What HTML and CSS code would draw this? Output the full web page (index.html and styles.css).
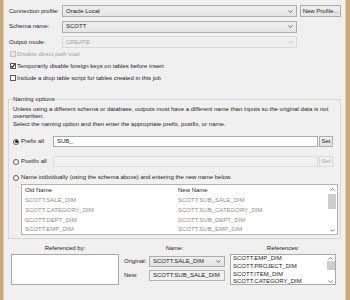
FILE: index.html
```html
<!DOCTYPE html>
<html>
<head>
<meta charset="utf-8">
<link rel="stylesheet" href="styles.css">
</head>
<body>
<div class="window">
  <div class="edge edge-left"></div>
  <div class="main">
    <div class="form-row">
      <span class="lbl">Connection profile:</span>
      <div class="combo"><span class="val">Oracle Local</span><svg class="chev" width="5" height="3" viewBox="0 0 5 3"><polyline points="0.5,0.4 2.5,2.4 4.5,0.4"/></svg></div>
      <div class="btn-cell"><button class="btn">New Profile...</button></div>
    </div>
    <div class="form-row">
      <span class="lbl">Schema name:</span>
      <div class="combo"><span class="val">SCOTT</span><svg class="chev" width="5" height="3" viewBox="0 0 5 3"><polyline points="0.5,0.4 2.5,2.4 4.5,0.4"/></svg></div>
      <div class="btn-cell"></div>
    </div>
    <div class="form-row">
      <span class="lbl">Output mode:</span>
      <div class="combo disabled"><span class="val">CREATE</span><svg class="chev" width="5" height="3" viewBox="0 0 5 3"><polyline points="0.5,0.4 2.5,2.4 4.5,0.4"/></svg></div>
      <div class="btn-cell"></div>
    </div>

    <div class="check disabled"><span class="box"></span><span>Disable direct path load</span></div>
    <div class="check"><span class="box"><svg width="6" height="6" viewBox="0 0 6 6"><polyline points="1.2,3 2.4,4.4 4.8,1.2"/></svg></span><span>Temporarily disable foreign keys on tables before insert</span></div>
    <div class="check"><span class="box"></span><span>Include a drop table script for tables created in this job</span></div>

    <fieldset class="group">
      <legend>Naming options</legend>
      <div class="desc">Unless using a different schema or database, outputs must have a different name than inputs so the original data is not<br>overwritten.<br>Select the naming option and then enter the appropriate prefix, postfix, or name.</div>

      <div class="opt-row first">
        <span class="radio-lbl"><span class="radio on"></span>Prefix all</span>
        <div class="field">SUB_</div>
        <button class="set">Set</button>
      </div>
      <div class="opt-row second">
        <span class="radio-lbl"><span class="radio"></span>Postfix all</span>
        <div class="field disabled"></div>
        <button class="set disabled">Set</button>
      </div>
      <div class="opt-row third">
        <span class="radio-lbl wide"><span class="radio"></span>Name individually (using the schema above) and entering the new name below.</span>
      </div>

      <div class="grid">
        <div class="grid-body">
          <div class="g-row head"><span class="c1">Old Name</span><span class="c2">New Name</span></div>
          <div class="g-row"><span class="c1">SCOTT.SALE_DIM</span><span class="c2">SCOTT.SUB_SALE_DIM</span></div>
          <div class="g-row"><span class="c1">SCOTT.CATEGORY_DIM</span><span class="c2">SCOTT.SUB_CATEGORY_DIM</span></div>
          <div class="g-row"><span class="c1">SCOTT.DEPT_DIM</span><span class="c2">SCOTT.SUB_DEPT_DIM</span></div>
          <div class="g-row"><span class="c1">SCOTT.EMP_DIM</span><span class="c2">SCOTT.SUB_EMP_DIM</span></div>
        </div>
        <div class="vscroll tall">
          <svg class="arr" width="5" height="3" viewBox="0 0 5 3"><polyline points="0.5,2.6 2.5,0.6 4.5,2.6"/></svg>
          <div class="thumb t1"></div>
          <div class="spacer"></div>
          <svg class="arr" width="5" height="3" viewBox="0 0 5 3"><polyline points="0.5,0.4 2.5,2.4 4.5,0.4"/></svg>
        </div>
      </div>
    </fieldset>

    <div class="bottom">
      <div class="col">
        <div class="title">Referenced by:</div>
        <div class="listbox"></div>
      </div>
      <div class="col">
        <div class="title">Name:</div>
        <div class="name-row r1">
          <span class="nlbl">Original:</span>
          <div class="combo small"><span class="val">SCOTT.SALE_DIM</span><svg class="chev" width="5" height="3" viewBox="0 0 5 3"><polyline points="0.5,0.4 2.5,2.4 4.5,0.4"/></svg></div>
        </div>
        <div class="name-row r2">
          <span class="nlbl">New:</span>
          <div class="field readonly">SCOTT.SUB_SALE_DIM</div>
        </div>
      </div>
      <div class="col">
        <div class="title">References:</div>
        <div class="listbox refs">
          <div class="items">
            <div>SCOTT.EMP_DIM</div>
            <div>SCOTT.PROJECT_DIM</div>
            <div>SCOTT.ITEM_DIM</div>
            <div>SCOTT.CATEGORY_DIM</div>
          </div>
          <div class="vscroll">
            <svg class="arr" width="5" height="3" viewBox="0 0 5 3"><polyline points="0.5,2.6 2.5,0.6 4.5,2.6"/></svg>
            <div class="thumb t2"></div>
            <div class="spacer"></div>
            <svg class="arr" width="5" height="3" viewBox="0 0 5 3"><polyline points="0.5,0.4 2.5,2.4 4.5,0.4"/></svg>
          </div>
        </div>
      </div>
    </div>
  </div>
  <div class="edge edge-right"></div>
</div>
</body>
</html>
```

FILE: styles.css
```css
* { box-sizing: border-box; }
html, body { margin: 0; padding: 0; }
body {
  width: 350px;
  height: 300px;
  overflow: hidden;
  background: #f0f0f0;
  font-family: "Liberation Sans", Arial, sans-serif;
  font-size: 6px;
  line-height: 7px;
  color: #1e1e1e;
}
.window { display: flex; width: 350px; height: 300px; }
.edge { background: #cba87c; flex: none; }
.edge-left { width: 4px; border-right: 1px solid #e3cfb3; }
.edge-right { width: 5px; border-left: 1px solid #e3cfb3; }
.main {
  flex: 1;
  min-width: 0;
  padding: 5px 4px 0 5px;
  display: flex;
  flex-direction: column;
}

/* top form */
.form-row {
  display: grid;
  grid-template-columns: 53px 1fr 44px;
  align-items: center;
  height: 12px;
  margin-bottom: 3.5px;
}
.form-row:nth-child(3) { margin-bottom: 0; }
.lbl { white-space: nowrap; }
.btn-cell { display: flex; justify-content: flex-end; height: 12px; }

.combo {
  height: 12px;
  border: 1px solid #adadad;
  background: linear-gradient(#eeeeee, #e4e4e4);
  display: flex;
  align-items: center;
  padding: 0 3px 0 3px;
}
.combo .val { flex: 1; white-space: nowrap; overflow: hidden; }
.chev { flex: none; }
.chev polyline, .arr polyline { fill: none; stroke: #4a4a4a; stroke-width: 0.8; }
.combo.disabled { background: #efefef; border-color: #dadada; color: #a3a3a3; }
.combo.disabled .chev polyline { stroke: #b8b8b8; }

.btn {
  width: 41px;
  height: 12px;
  padding: 0;
  margin: 0;
  border: 1px solid #adadad;
  background: linear-gradient(#efefef, #e3e3e3);
  font: inherit;
  color: #1e1e1e;
  white-space: nowrap;
}

/* checkboxes */
.check {
  display: flex;
  align-items: center;
  gap: 1px;
  height: 12px;
  padding-left: 1px;
  white-space: nowrap;
}
.check .box {
  width: 6px;
  height: 6px;
  border: 1px solid #5a5a5a;
  background: #fff;
  display: flex;
  align-items: center;
  justify-content: center;
  flex: none;
}
.check .box svg { display: block; margin: -1px; }
.check .box polyline { fill: none; stroke: #1e1e1e; stroke-width: 1.1; }
.check.disabled { color: #a3a3a3; }
.check.disabled .box { border-color: #c4c4c4; background: #e6e6e6; }

/* group box */
.group {
  margin: 11.5px 0 0 -1px;
  padding: 3px 2px 3px 4px;
  border: 1px solid #d8d8d8;
  min-width: 0;
}
.group legend { padding: 0; margin-left: 0; line-height: 7px; }
.desc { line-height: 7.5px; white-space: nowrap; }

.opt-row {
  display: flex;
  align-items: center;
  height: 11px;
  margin-right: 5px;
}
.opt-row.first { margin-top: 8.3px; }
.opt-row.second { margin-top: 9px; }
.opt-row.third { margin-top: 5px; }
.radio-lbl {
  width: 40px;
  flex: none;
  display: flex;
  align-items: center;
  gap: 2px;
  white-space: nowrap;
}
.radio-lbl.wide { width: auto; }
.radio {
  width: 6px;
  height: 6px;
  border-radius: 50%;
  border: 1px solid #5a5a5a;
  background: #fff;
  flex: none;
  display: flex;
  align-items: center;
  justify-content: center;
}
.radio.on::after {
  content: "";
  width: 3px;
  height: 3px;
  border-radius: 50%;
  background: #1e1e1e;
}
.field {
  flex: 1;
  height: 11px;
  border: 1px solid #ababab;
  background: #fff;
  padding: 0 3px;
  display: flex;
  align-items: center;
  white-space: nowrap;
}
.field.disabled { background: #f0f0f0; border-color: #dcdcdc; }
.field.readonly { background: #f0f0f0; border-color: #b5b5b5; }
.set {
  width: 14px;
  height: 11px;
  margin: 0 0 0 1px;
  padding: 0;
  border: 1px solid #adadad;
  background: linear-gradient(#efefef, #e3e3e3);
  font: inherit;
  color: #1e1e1e;
}
.set.disabled { border-color: #dadada; background: #f0f0f0; color: #a8a8a8; }

/* list view */
.grid {
  margin: 1px 0 0 8px;
  height: 51px;
  border: 1px solid #b4b4b4;
  background: #fff;
  display: flex;
}
.grid-body { flex: 1; min-width: 0; }
.g-row { display: flex; height: 9.75px; align-items: center; color: #8c8c8c; white-space: nowrap; }
.g-row.head { height: 10.5px; color: #1e1e1e; }
.g-row .c1 { width: 153px; padding-left: 3px; flex: none; }
.g-row .c2 { padding-left: 3px; }

.vscroll {
  width: 10px;
  flex: none;
  display: flex;
  flex-direction: column;
  align-items: center;
  padding: 3px 0 2px;
  background: #fff;
}
.vscroll .arr { flex: none; display: block; }
.vscroll .arr polyline { stroke: #606060; }
.thumb { width: 8px; background: #cdcdcd; flex: none; }
.thumb.t1 { height: 15px; margin-top: 3px; }
.thumb.t2 { height: 9px; margin-top: 1px; }
.spacer { flex: 1; }

/* bottom */
.bottom {
  display: grid;
  grid-template-columns: 108px 101px 106px;
  column-gap: 5px;
  margin: 5.5px 0 0 2px;
}
.col { display: flex; flex-direction: column; }
.title { text-align: center; line-height: 7px; margin-bottom: 2.5px; white-space: nowrap; }
.listbox {
  height: 31px;
  border: 1px solid #a9a9a9;
  background: #fff;
}
.listbox.refs { display: flex; }
.items { flex: 1; min-width: 0; padding-left: 2px; overflow: hidden; }
.items div { line-height: 7.7px; white-space: nowrap; }
.refs .vscroll { width: 9px; padding: 2px 0 1px; }

.name-row { display: flex; align-items: center; height: 11px; }
.name-row.r1 { margin-top: 2px; }
.name-row.r2 { margin-top: 3px; }
.nlbl { width: 25px; flex: none; white-space: nowrap; }
.combo.small { flex: 1; height: 11px; }
.name-row .field { flex: 1; }
```
